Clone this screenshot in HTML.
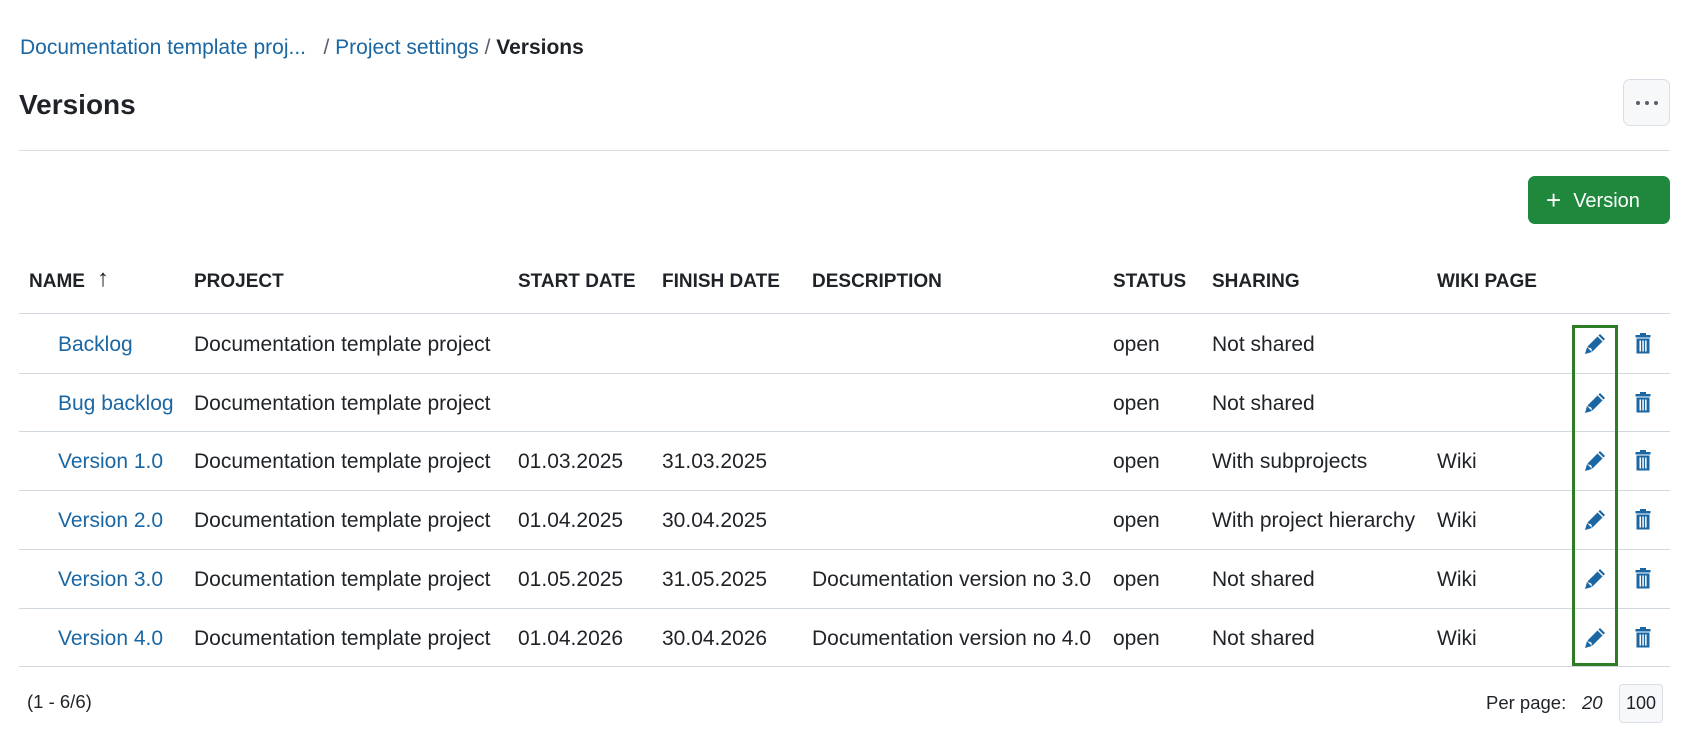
<!DOCTYPE html>
<html><head><meta charset="utf-8"><style>
*{margin:0;padding:0;box-sizing:border-box}
body{width:1690px;height:736px;background:#fff;font-family:"Liberation Sans",sans-serif;color:#1f2328;position:relative;overflow:hidden}
.a{position:absolute;white-space:nowrap}
a{color:#1a67a3;text-decoration:none}
.bc{top:36px;left:20px;font-size:21px;color:#1a67a3}
.bc b{color:#1f2328}
.title{top:89px;left:19px;font-size:28px;font-weight:bold}
.more{left:1623px;top:79px;width:47px;height:47px;border:1px solid #d8dee4;border-radius:7px;background:#f6f8fa}
.hr{left:19px;width:1651px;height:1px;background:#d8dee4}
.btn{left:1528px;top:176px;width:142px;height:48px;background:#1f883d;border-radius:7px;color:#fff;font-size:20px;line-height:48px;padding-left:18px}
.h{font-size:19px;font-weight:bold;top:271px;line-height:22px}
.c{font-size:21px}
.line{left:19px;width:1651px;height:1px;background:#d0d7de}
</style></head><body>
<div class="a bc">Documentation template proj...&nbsp;&nbsp;&nbsp;<span style="color:#57606a">/</span> Project settings <span style="color:#57606a">/</span> <b>Versions</b></div>
<div class="a title">Versions</div>
<div class="a more"><svg width="47" height="47"><circle cx="14" cy="23" r="2" fill="#57606a"/><circle cx="23" cy="23" r="2" fill="#57606a"/><circle cx="32" cy="23" r="2" fill="#57606a"/></svg></div>
<div class="a hr" style="top:150px"></div>
<div class="a btn"><span style="font-size:26px;vertical-align:-2px;margin-right:12px">+</span>Version</div>

<div class="a h" style="left:29px">NAME</div>
<div class="a" style="left:97px;top:266px;font-size:24px;line-height:26px">&#8593;</div>
<div class="a h" style="left:194px">PROJECT</div>
<div class="a h" style="left:518px">START DATE</div>
<div class="a h" style="left:662px">FINISH DATE</div>
<div class="a h" style="left:812px">DESCRIPTION</div>
<div class="a h" style="left:1113px">STATUS</div>
<div class="a h" style="left:1212px">SHARING</div>
<div class="a h" style="left:1437px">WIKI PAGE</div>
<div class="a line" style="top:313px"></div>

<div id="rows"></div>
<script>
var d=[["Backlog","","","","Not shared",""],["Bug backlog","","","","Not shared",""],["Version 1.0","01.03.2025","31.03.2025","","With subprojects","Wiki"],["Version 2.0","01.04.2025","30.04.2025","","With project hierarchy","Wiki"],["Version 3.0","01.05.2025","31.05.2025","Documentation version no 3.0","Not shared","Wiki"],["Version 4.0","01.04.2026","30.04.2026","Documentation version no 4.0","Not shared","Wiki"]];
var h="";
var pen='<svg width="24" height="24" viewBox="0 0 24 24"><path d="M17 2l5 5-12.5 12.5-5-5z" fill="#1a67a3"/><path d="M15 4l5 5" stroke="#fff" stroke-width="1.3"/><path d="M6.5 16l2 2" stroke="#fff" stroke-width="1.3"/><path d="M4 15l5 5-7 2z" fill="#1a67a3"/></svg>';
var tr='<svg width="18" height="24" viewBox="0 0 18 24"><rect x="6" y="1" width="6" height="2" fill="#1a67a3"/><rect x="1.5" y="3" width="15" height="2.5" fill="#1a67a3"/><rect x="2.5" y="6.5" width="13" height="15" fill="#1a67a3"/><rect x="5.5" y="8.5" width="1.5" height="11" fill="#fff"/><rect x="8.3" y="8.5" width="1.5" height="11" fill="#fff"/><rect x="11.1" y="8.5" width="1.5" height="11" fill="#fff"/></svg>';
for(var i=0;i<6;i++){var y=314+i*58.7;var t=y+19;var r=d[i];
h+='<div class="a c" style="top:'+t+'px;left:58px"><a>'+r[0]+'</a></div>';
h+='<div class="a c" style="top:'+t+'px;left:194px">Documentation template project</div>';
h+='<div class="a c" style="top:'+t+'px;left:518px">'+r[1]+'</div>';
h+='<div class="a c" style="top:'+t+'px;left:662px">'+r[2]+'</div>';
h+='<div class="a c" style="top:'+t+'px;left:812px">'+r[3]+'</div>';
h+='<div class="a c" style="top:'+t+'px;left:1113px">open</div>';
h+='<div class="a c" style="top:'+t+'px;left:1212px">'+r[4]+'</div>';
h+='<div class="a c" style="top:'+t+'px;left:1437px">'+r[5]+'</div>';
h+='<div class="a" style="top:'+(y+18)+'px;left:1583px">'+pen+'</div>';
h+='<div class="a" style="top:'+(y+18)+'px;left:1634px">'+tr+'</div>';
h+='<div class="a line" style="top:'+(y+58.7)+'px"></div>';}
document.getElementById("rows").innerHTML=h;
</script>
<div class="a" style="left:1572px;top:325px;width:46px;height:341px;border:3px solid #2e7d24"></div>

<div class="a" style="left:27px;top:691px;font-size:18.5px">(1 - 6/6)</div>
<div class="a" style="left:1486px;top:692px;font-size:18.5px">Per page:</div>
<div class="a" style="left:1582px;top:692px;font-size:18.5px;font-style:italic">20</div>
<div class="a" style="left:1619px;top:684px;width:44px;height:39px;background:#f6f8fa;border:1px solid #d8dee4;border-radius:4px;font-size:18px;line-height:37px;text-align:center">100</div>
</body></html>
